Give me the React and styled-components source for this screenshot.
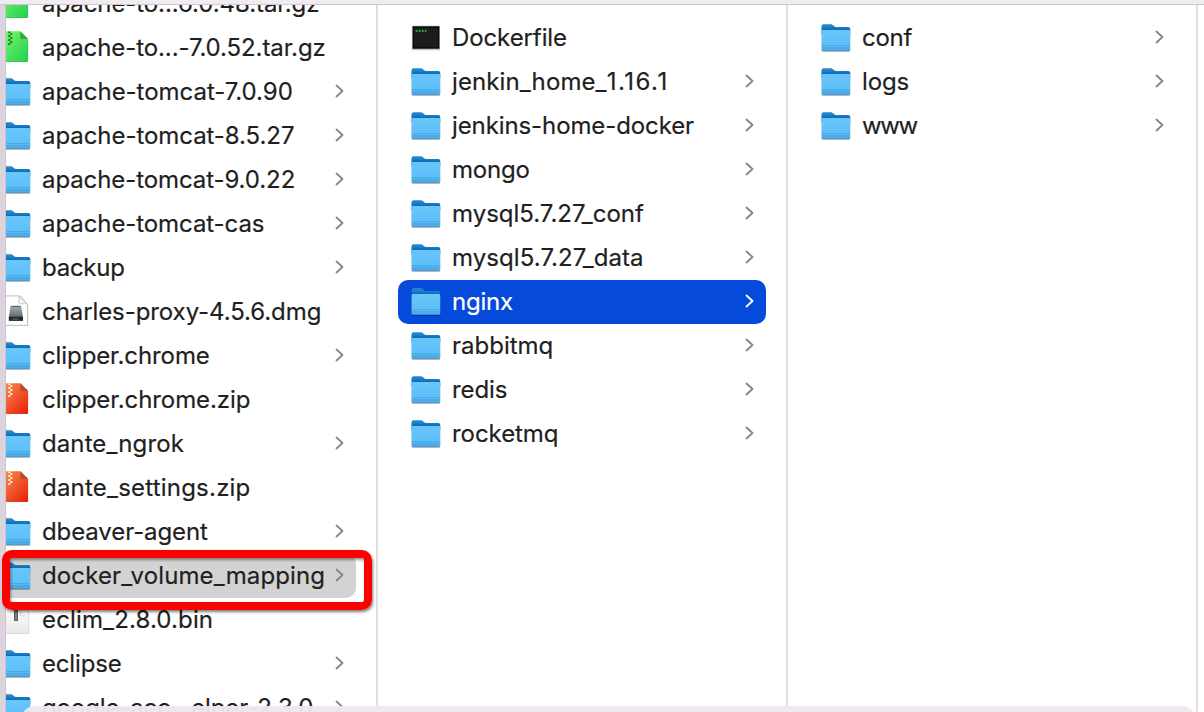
import React from 'react';
import styled, { createGlobalStyle } from 'styled-components';

const GlobalStyle = createGlobalStyle`
  html, body { margin: 0; padding: 0; background: #fff; overflow: hidden; }
  *, *::before, *::after { box-sizing: border-box; }
`;

const Window = styled.div`
  position: relative;
  display: flex;
  flex-direction: column;
  width: 1204px;
  height: 712px;
  overflow: hidden;
  background: #fff;
  color: #1f1f1f;
  font-family: Inter, "Liberation Sans", sans-serif;
`;

const TopBar = styled.div`
  flex: none;
  height: 5px;
  background: #f3ebf4;
  border-bottom: 1px solid #cfc8cf;
`;

const Body = styled.div`
  flex: 1;
  display: flex;
  min-height: 0;
`;

const SidebarEdge = styled.div`
  flex: none;
  width: 6px;
  background: #dcd4dd;
  border-right: 1px solid #cdc6ce;
`;

const Browser = styled.div`
  flex: 1;
  display: flex;
  min-width: 0;
  overflow: hidden;
`;

const Column = styled.div`
  flex: none;
  width: 410px;
  padding: ${(p) => (p.$scrolled ? '0' : '11px')} 20px 0;
  margin-left: ${(p) => (p.$scrolled ? '-38px' : '0')};
  border-right: 2px solid #dfdfdf;
  overflow: hidden;
`;

const List = styled.div`
  display: flex;
  flex-direction: column;
  margin-top: ${(p) => (p.$scrolled ? '-23px' : '0')};
`;

const Row = styled.div`
  flex: none;
  display: flex;
  align-items: center;
  height: 44px;
  padding: 0 12px;
  border-radius: 10px;
  color: ${(p) => (p.$state === 'active' ? '#fff' : 'inherit')};
  background: ${(p) => ({ active: '#064adb', path: '#d3d3d3' })[p.$state] || 'transparent'};
`;

const Label = styled.span`
  flex: 1;
  padding-left: 10px;
  font-size: 24px;
  line-height: 44px;
  white-space: nowrap;
  letter-spacing: ${(p) => p.$track || 0}px;
  -webkit-text-stroke: 0.2px currentColor;
`;

const Version = styled.span`
  letter-spacing: 1.5px;
`;

const Glyph = styled.svg`
  flex: none;
  display: block;
  width: 32px;
  height: 36px;
  overflow: visible;
`;

const Arrow = styled.svg`
  flex: none;
  display: block;
  width: 9px;
  height: 14px;
  margin-top: -2px;
  fill: none;
  stroke: ${(p) => (p.$state === 'active' ? '#fff' : '#858585')};
  stroke-width: 1.8;
  stroke-linecap: round;
  stroke-linejoin: round;
`;

const Highlight = styled.div`
  position: absolute;
  left: 2px;
  top: 550px;
  width: 370px;
  height: 60px;
  border: 8px solid #fe0000;
  border-radius: 10px;
  box-shadow: 1px 2px 3px rgba(0, 0, 0, 0.5), inset 1px 2px 3px rgba(0, 0, 0, 0.4);
`;

const BottomBar = styled.div`
  position: absolute;
  left: 21px;
  top: 706px;
  width: 1175px;
  height: 28px;
  border-radius: 14px;
  background: rgba(238, 231, 238, 0.96);
`;

const Defs = styled.svg`
  position: absolute;
  width: 0;
  height: 0;
`;

function Gradients() {
  return (
    <Defs aria-hidden="true">
      <defs>
        <linearGradient id="folderBack" x1="0" y1="0" x2="0" y2="1">
          <stop offset="0" stopColor="#2c8fd3" />
          <stop offset="0.6" stopColor="#0b6abb" />
          <stop offset="1" stopColor="#0b6abb" />
        </linearGradient>
        <linearGradient id="folderFront" x1="0" y1="0" x2="0" y2="1">
          <stop offset="0" stopColor="#69c6fa" />
          <stop offset="0.75" stopColor="#5fbff9" />
          <stop offset="1" stopColor="#48a9e4" />
        </linearGradient>
        <linearGradient id="green" x1="0" y1="0" x2="1" y2="1">
          <stop offset="0" stopColor="#7dfa67" />
          <stop offset="1" stopColor="#20cf55" />
        </linearGradient>
        <linearGradient id="orange" x1="0" y1="0" x2="1" y2="1">
          <stop offset="0" stopColor="#f89352" />
          <stop offset="1" stopColor="#ea1d09" />
        </linearGradient>
        <linearGradient id="drive" x1="0" y1="0" x2="0" y2="1">
          <stop offset="0" stopColor="#a4afb2" />
          <stop offset="1" stopColor="#5d696d" />
        </linearGradient>
        <linearGradient id="paper" x1="0" y1="0" x2="0" y2="1">
          <stop offset="0" stopColor="#ffffff" />
          <stop offset="1" stopColor="#e9e9e9" />
        </linearGradient>
        <filter id="soft" x="-20%" y="-20%" width="140%" height="140%">
          <feDropShadow dx="0" dy="0.8" stdDeviation="0.7" floodColor="#000" floodOpacity="0.4" />
        </filter>
      </defs>
    </Defs>
  );
}

function Archive({ fill, fold, tooth }) {
  return (
    <g transform="translate(-1.7 -1.2)">
      <path d="M3 2.5H22L29.7 10V32a1.2 1.2 0 0 1-1.2 1.2H3z" fill={`url(#${fill})`} />
      <path d="M5 32.8H28.5a1 1 0 0 0 1-1V11" fill="none" stroke={fold} strokeOpacity="0.4" strokeWidth="0.7" />
      <path d="M22 2.5L29.7 10.3H23.5A1.5 1.5 0 0 1 22 8.8z" fill={fold} />
      <path
        d="M10 3.5h2M12 5.3h2M10 7.2h2M12 9.2h2M10 11.2h2M12 13.2h2M10 15.2h2"
        stroke={tooth}
        strokeWidth="1.8"
      />
    </g>
  );
}

const art = {
  folder: (
    <g filter="url(#soft)">
      <path d="M1.6 6a1.8 1.8 0 0 1 1.8-1.8h7.4c1 0 1.6.4 2.3 1.1l1 .9c.6.5 1.1.7 1.9.7H28.4a1.8 1.8 0 0 1 1.8 1.8V14H1.6z" fill="url(#folderBack)" />
      <path d="M1.6 11.2a1.3 1.3 0 0 1 1.3-1.3H28.9a1.3 1.3 0 0 1 1.3 1.3V29.4a1.3 1.3 0 0 1-1.3 1.3H2.9a1.3 1.3 0 0 1-1.3-1.3z" fill="url(#folderFront)" />
      <path d="M2 25.6H29.8M2 27.8H29.8" stroke="#3b9bd8" strokeWidth="0.6" />
      <path d="M2.5 30.4H29.3" stroke="#378fca" strokeWidth="0.6" />
    </g>
  ),
  green: <Archive fill="green" fold="#37a640" tooth="#2a6b22" />,
  zip: <Archive fill="orange" fold="#b34c2c" tooth="#fff3e4" />,
  dmg: (
    <g transform="translate(-1.6 -1.1)">
      <path d="M3 3H20.5Q23 3 25 6.5L29.2 12V32.5H3z" fill="#fefefe" stroke="#b6b6b6" strokeWidth="0.9" />
      <path d="M20.5 3.5V9Q20.5 10.8 22.3 10.8H28.8z" fill="#f6f6f6" stroke="#bdbdbd" strokeWidth="0.8" />
      <path d="M12 13H22.8L24.6 24.5H10.4z" fill="url(#drive)" />
      <path d="M10.4 23.8H24.6V28H10.4z" fill="#24292b" />
      <path d="M14 26.2H20" stroke="#6c777a" strokeWidth="1" />
      <path d="M13 13.4H22" stroke="#40494b" strokeWidth="0.9" />
    </g>
  ),
  bin: (
    <g transform="translate(-1.3 -1.4)">
      <path d="M3 3H21L30 11V33H3z" fill="url(#paper)" stroke="#cfcfcf" strokeWidth="0.7" />
      <path d="M21.5 3.5V15.3H27.5" fill="#f8f8f8" stroke="#d0d0d0" strokeWidth="0.8" />
      <path d="M17.3 4V20.4" stroke="#4e4e4e" strokeWidth="3.8" />
      <path d="M17.3 11V20" stroke="#929292" strokeWidth="1.4" />
    </g>
  ),
  exec: (
    <g filter="url(#soft)">
      <path d="M1.9 5.7H30V29.2H1.9z" fill="#b7c9cf" />
      <path d="M2.6 6.3H29.4V28.7H2.6z" fill="#050505" />
      <path d="M3.8 7.5H28.2V27.4H3.800z" fill="#1c1d1d" />
      <path d="M5.7 10.8h2.3M8.8 10.8h2.300M11.900 10.800h2.100M14.800 10.800h1.700" stroke="#28a63c" strokeWidth="2.200" strokeDasharray="1.600 0.400" />
    </g>
  ),
};

function Item({ kind = 'folder', name, version, track, state }) {
  return (
    <Row $state={state}>
      <Glyph viewBox="0 0 32 36">{art[kind]}</Glyph>
      <Label $track={track}>
        {name}
        {version && <Version>{version}</Version>}
      </Label>
      {kind === 'folder' && (
        <Arrow viewBox="0 0 9 14" $state={state}>
          <path d="M1.5 1.5L7.500 7L1.500 12.500" />
        </Arrow>
      )}
    </Row>
  );
}

const columns = [
  {
    scrolled: true,
    items: [
      { kind: 'green', name: 'apache-to...6.0.48.tar.gz', track: -0.08 },
      { kind: 'green', name: 'apache-to...-7.0.52.tar.gz', track: -0.09 },
      { name: 'apache-tomcat-7.0.90', track: -0.03 },
      { name: 'apache-tomcat-8.5.27', track: -0.06 },
      { name: 'apache-tomcat-9.0.22', track: -0.09 },
      { name: 'apache-tomcat-cas', track: -0.08 },
      { name: 'backup', track: -0.25 },
      { kind: 'dmg', name: 'charles-proxy-4.5.6.dmg', track: -0.08 },
      { name: 'clipper.chrome', track: -0.1 },
      { kind: 'zip', name: 'clipper.chrome.zip', track: -0.08 },
      { name: 'dante_ngrok', track: 0.1 },
      { kind: 'zip', name: 'dante_settings.zip', track: 0.21 },
      { name: 'dbeaver-agent', track: -0.1 },
      { name: 'docker_volume_mapping', track: 0.14, state: 'path' },
      { kind: 'bin', name: 'eclim_2.8.0.bin', track: 0.14 },
      { name: 'eclipse', track: -0.17 },
      { name: 'google-acc...elper-2.3.0', track: -0.12 },
    ],
  },
  {
    items: [
      { kind: 'exec', name: 'Dockerfile', track: -0.1 },
      { name: 'jenkin_home_', version: '1.16.1', track: 0.1 },
      { name: 'jenkins-home-docker', track: -0.1 },
      { name: 'mongo', track: -0.2 },
      { name: 'mysql5.7.27_conf' },
      { name: 'mysql5.7.27_data', track: 0.08 },
      { name: 'nginx', track: -0.2, state: 'active' },
      { name: 'rabbitmq' },
      { name: 'redis', track: -0.1 },
      { name: 'rocketmq', track: -0.06 },
    ],
  },
  {
    items: [
      { name: 'conf', track: -0.3 },
      { name: 'logs', track: -0.15 },
      { name: 'www', track: -1.4 },
    ],
  },
];

export default function App() {
  return (
    <Window>
      <GlobalStyle />
      <Gradients />
      <TopBar />
      <Body>
        <SidebarEdge />
        <Browser>
          {columns.map((column, index) => (
            <Column key={index} $scrolled={column.scrolled}>
              <List $scrolled={column.scrolled}>
                {column.items.map((item) => (
                  <Item key={item.name} {...item} />
                ))}
              </List>
            </Column>
          ))}
        </Browser>
      </Body>
      <BottomBar />
      <Highlight />
    </Window>
  );
}
